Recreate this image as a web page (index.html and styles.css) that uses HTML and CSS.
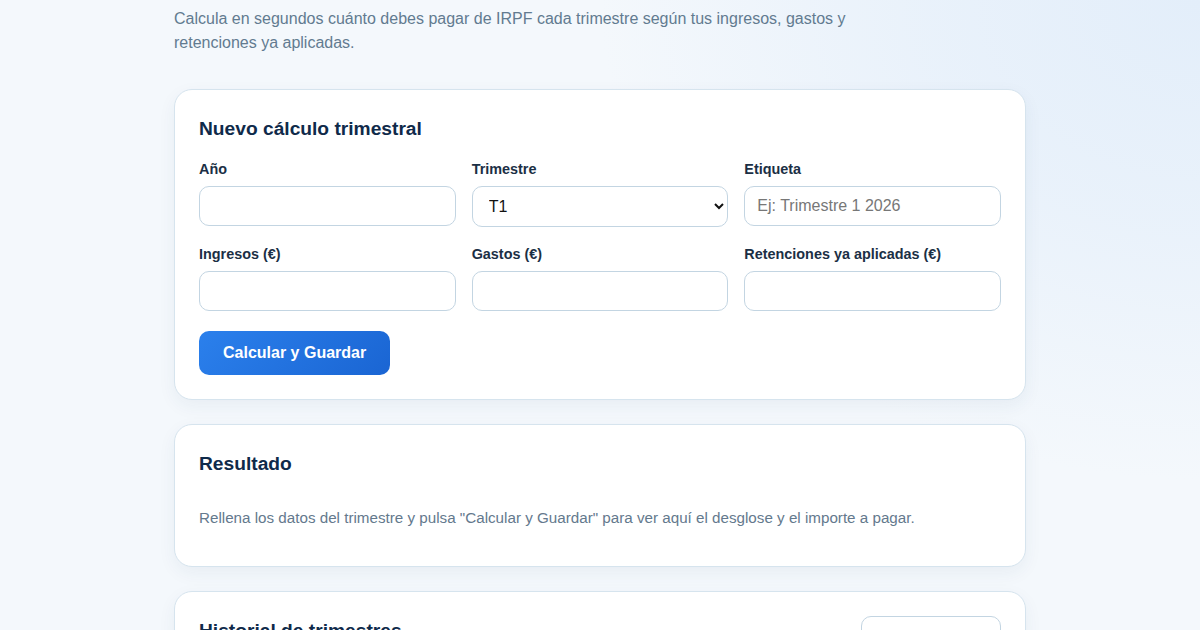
FILE: index.html
```html
<!DOCTYPE html>
<html lang="es">
<head>
<meta charset="utf-8">
<title>Calculadora IRPF trimestral</title>
<link rel="stylesheet" href="styles.css">
</head>
<body>
<main class="container">
  <p class="subtitle">Calcula en segundos cuánto debes pagar de IRPF cada trimestre según tus ingresos, gastos y retenciones ya aplicadas.</p>

  <section class="card">
    <h2 class="card-title">Nuevo cálculo trimestral</h2>
    <form class="form-grid">
      <div class="field">
        <label class="label" for="anio">Año</label>
        <input class="input" id="anio" type="number">
      </div>
      <div class="field">
        <label class="label" for="trim">Trimestre</label>
        <select class="input select" id="trim">
          <option>T1</option>
          <option>T2</option>
          <option>T3</option>
          <option>T4</option>
        </select>
      </div>
      <div class="field">
        <label class="label" for="etq">Etiqueta</label>
        <input class="input" id="etq" type="text" placeholder="Ej: Trimestre 1 2026">
      </div>
      <div class="field">
        <label class="label" for="ing">Ingresos (€)</label>
        <input class="input" id="ing" type="number">
      </div>
      <div class="field">
        <label class="label" for="gas">Gastos (€)</label>
        <input class="input" id="gas" type="number">
      </div>
      <div class="field">
        <label class="label" for="ret">Retenciones ya aplicadas (€)</label>
        <input class="input" id="ret" type="number">
      </div>
    </form>
    <button class="btn-primary" type="button">Calcular y Guardar</button>
  </section>

  <section class="card">
    <h2 class="card-title">Resultado</h2>
    <p class="empty">Rellena los datos del trimestre y pulsa "Calcular y Guardar" para ver aquí el desglose y el importe a pagar.</p>
  </section>

  <section class="card">
    <div class="card-header">
      <h2 class="card-title flush">Historial de trimestres</h2>
      <button class="btn-outline" type="button">Exportar CSV</button>
    </div>
  </section>
</main>
</body>
</html>
```

FILE: styles.css
```css
* { box-sizing: border-box; }

html, body { height: 100%; }

body {
  margin: 0;
  font-family: "Liberation Sans", Arial, sans-serif;
  color: #1b2f45;
  background:
    radial-gradient(ellipse 600px 480px at 100% 0%, #e3eefa 0%, rgba(227,238,250,0.65) 45%, rgba(244,248,252,0) 100%),
    #f4f8fc;
  background-attachment: fixed;
}

.container {
  width: 852px;
  margin: 0 auto;
  padding: 7px 0 40px;
}

.subtitle {
  margin: 0 0 34px;
  max-width: 680px;
  font-size: 16px;
  line-height: 24px;
  color: #627b90;
}

.card {
  background: #fff;
  border: 1px solid #d6e4ee;
  border-radius: 18px;
  padding: 24px;
  margin-bottom: 24px;
  box-shadow: 0 6px 18px rgba(30, 70, 110, 0.06);
}

.card-title {
  margin: 0 0 16px;
  font-size: 19.2px;
  line-height: 30px;
  font-weight: 700;
  color: #0f2a4a;
}

.card-title.flush { margin: 0; }

.form-grid {
  display: grid;
  grid-template-columns: repeat(3, 1fr);
  column-gap: 16px;
  row-gap: 18px;
}

.field {
  display: flex;
  flex-direction: column;
  gap: 8px;
}

.label {
  font-size: 14.4px;
  line-height: 18px;
  font-weight: 700;
  color: #1b2f45;
}

.input {
  height: 40px;
  width: 100%;
  border: 1px solid #c3d5e2;
  border-radius: 10px;
  padding: 0 12px;
  font-family: "Liberation Sans", Arial, sans-serif;
  font-size: 16px;
  color: #111;
  background: #fff;
}

.input::placeholder { color: #777; }

.select {
  height: 41px;
  padding: 0 12px;
}

.btn-primary {
  margin-top: 20px;
  height: 44px;
  padding: 0 24px;
  border: 0;
  border-radius: 10px;
  background: linear-gradient(135deg, #2b80ec 0%, #1a65d3 100%);
  color: #fff;
  font-family: "Liberation Sans", Arial, sans-serif;
  font-size: 16px;
  font-weight: 700;
}

.empty {
  margin: 0;
  padding: 12px 0 12px;
  font-size: 15.2px;
  line-height: 22.8px;
  color: #64798d;
}

.card-header {
  display: flex;
  justify-content: space-between;
  align-items: flex-start;
}

.btn-outline {
  width: 140px;
  height: 40px;
  border: 1px solid #c3d5e2;
  border-radius: 10px;
  background: #fff;
  color: #1b2f45;
  font-family: "Liberation Sans", Arial, sans-serif;
  font-size: 14px;
  font-weight: 700;
  padding-top: 8px;
}
```
